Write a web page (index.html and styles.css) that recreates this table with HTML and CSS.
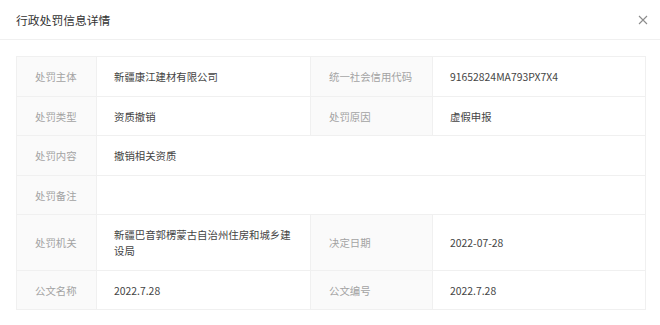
FILE: index.html
```html
<!DOCTYPE html>
<html lang="zh">
<head>
<meta charset="utf-8">
<link rel="stylesheet" href="styles.css">
</head>
<body>
<div class="dialog">
  <div class="header">
    <div class="title">行政处罚信息详情</div>
    <div class="close" aria-label="关闭">
      <svg width="10" height="10" viewBox="0 0 10 10"><path d="M1 1L9 9M9 1L1 9" stroke="#8c8c8c" stroke-width="1.1" fill="none"/></svg>
    </div>
  </div>
  <div class="body">
    <table class="info">
      <colgroup>
        <col class="c-label1"><col class="c-value1"><col class="c-label2"><col class="c-value2">
      </colgroup>
      <tr><th>处罚主体</th><td>新疆康江建材有限公司</td><th>统一社会信用代码</th><td>91652824MA793PX7X4</td></tr>
      <tr><th>处罚类型</th><td>资质撤销</td><th>处罚原因</th><td>虚假申报</td></tr>
      <tr><th>处罚内容</th><td colspan="3">撤销相关资质</td></tr>
      <tr><th>处罚备注</th><td colspan="3"></td></tr>
      <tr><th>处罚机关</th><td>新疆巴音郭楞蒙古自治州住房和城乡建设局</td><th>决定日期</th><td>2022-07-28</td></tr>
      <tr><th>公文名称</th><td>2022.7.28</td><th>公文编号</th><td>2022.7.28</td></tr>
    </table>
  </div>
</div>
</body>
</html>
```

FILE: styles.css
```css
* { box-sizing: border-box; }
html, body { margin: 0; padding: 0; background: #fff; }
body {
  font-family: "Noto Sans CJK SC", "Noto Sans", sans-serif;
  color: #333;
}
.dialog { width: 660px; }
.header {
  height: 40px;
  border-bottom: 1px solid #f0f0f0;
  display: flex;
  align-items: center;
  justify-content: space-between;
  padding: 0 11px 0 16px;
}
.title {
  font-size: 11.8px;
  color: #333;
  line-height: 16px;
}
.close {
  width: 12px;
  height: 12px;
  display: flex;
  align-items: center;
  justify-content: center;
}
.body { padding: 16px 15px 0 16px; }
.info {
  width: 629px;
  border-collapse: collapse;
  table-layout: fixed;
  font-size: 10.4px;
  line-height: 15.6px;
}
.c-label1 { width: 80px; }
.c-value1 { width: 214px; }
.c-label2 { width: 122px; }
.c-value2 { width: 213px; }
.info th, .info td {
  border: 1px solid #f0f0f0;
  padding: 12px 16px 11px 17px;
  text-align: left;
  vertical-align: middle;
  font-weight: normal;
}
.info th {
  background: #fafafa;
  color: #a3a3a3;
  padding-left: 18px;
}
.info td { color: #444; }
```
